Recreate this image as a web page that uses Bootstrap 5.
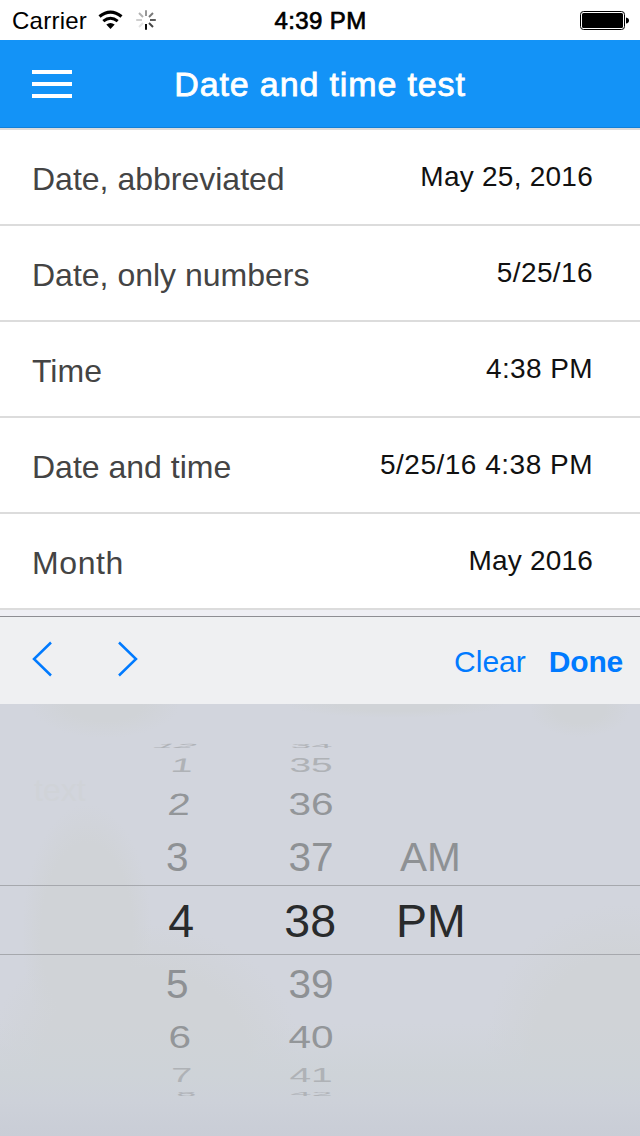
<!DOCTYPE html>
<html lang="en">
<head>
<meta charset="utf-8">
<meta name="viewport" content="width=device-width, initial-scale=1">
<title>Date and time test</title>
<link href="https://cdn.jsdelivr.net/npm/bootstrap@5.3.0/dist/css/bootstrap.min.css" rel="stylesheet">
<style>
body{font-family:"Liberation Sans",Arial,sans-serif;background:#efeff4;height:1136px;overflow:hidden;line-height:1;color:#000}
.status-bar{height:40px;font-size:24px;background:#fff}
.carrier{letter-spacing:.25px;padding-top:2px}
.clock{letter-spacing:.4px;-webkit-text-stroke:.7px #000;padding-top:2px;margin-right:1px}
.app-bar{height:88px;background:#1393f7;border-bottom:1px solid #1080da}
.app-title{font-size:34px;letter-spacing:.86px;color:#fff;-webkit-text-stroke:.8px #fff;line-height:40px}
.fields{border-top:2px solid #dcdcdc}
.list-group-flush>.field-row{height:96px;padding:0 47px 0 32px;border:solid #dcdcdc;border-width:0 0 2px!important;background:#fff;border-radius:0}
.field-label{font-size:32px;color:#444;line-height:36px;padding-top:3px}
.field-value{font-size:28px;color:#111;letter-spacing:.4px;line-height:36px;margin-top:-1px}
.accessory{height:88px;margin-top:6px;background:#eff0f2;border-top:1px solid #8e8e93;padding:0 17px 0 32px;color:#007aff;font-size:30px}
.btn-plain{border:0;background:none;color:#007aff;padding:2px 0 0;line-height:36px;font-size:30px}
.wheel{height:432px;padding-top:38px;grid-template-rows:8px 30px 48px 57px 70px 57px 48px 30px 8px;align-content:start;
background:
radial-gradient(ellipse 75px 34px at 105px 0,#d0d3d7 50%,transparent),
radial-gradient(ellipse 110px 14px at 395px 0,#d0d3d7 50%,transparent),
radial-gradient(ellipse 50px 28px at 580px 5px,#d0d3d7 50%,transparent),
linear-gradient(#ced2d600 0,#ced2d600 74%,#ced3d8 86%,#cdd1d9 92%,#c9cdd6 100%),
radial-gradient(ellipse 65px 130px at 87px 230px,#d0d3d7 70%,transparent),
radial-gradient(ellipse 155px 130px at 145px 350px,#d0d3d7 65%,transparent),
radial-gradient(ellipse 135px 150px at 620px 350px,#d0d3d7 65%,transparent),
linear-gradient(#d2d5dd 0,#d2d5dd 82%,#d0d3d8 91%,#cbcfd6 100%)}
.wheel-row{display:grid;grid-template-columns:194px 142px 304px;grid-template-rows:100%;min-height:0;color:#8e9194;font-size:40.5px}
.wheel-row>span{display:flex;align-items:center;justify-content:flex-end;white-space:nowrap;line-height:1;min-height:0}
.wheel-row>span:last-child{justify-content:flex-start;padding-left:63px}
.wheel-row i{font-style:normal;display:block}
.chosen{font-size:46.5px;color:#292b2c;border-top:1px solid #a6a8ad;border-bottom:1px solid #a6a8ad}
.tilt-2{color:#939699}
.tilt-3{color:#afb2b6}
.tilt-4{color:#b0b3b8}
.ghost{left:34px;top:70px;font-size:32px;color:#d0d3d8}
</style>
<script src="https://cdn.jsdelivr.net/npm/bootstrap@5.3.0/dist/js/bootstrap.bundle.min.js"></script>
</head>
<body class="d-flex flex-column">
<div class="status-bar row g-0 align-items-center flex-shrink-0">
  <div class="col d-flex align-items-center" style="padding-left:12px">
    <span class="carrier">Carrier</span>
    <svg width="26" height="20" viewBox="98 10 26 20" style="margin-left:11px" fill="none" stroke="#000"><path d="M99.5 16.6Q110.5 7.6 121.500 16.600" stroke-width="3.200"/><path d="M103.300 21.200Q110.500 15.400 117.700 21.200" stroke-width="3"/><path d="M106.300 24.500Q110.500 21.300 114.700 24.500L110.500 28.900Z" fill="#000" stroke="none"/></svg>
    <svg width="20" height="20" viewBox="-10 -10 20 20" style="margin-left:12px" stroke-width="1.900"><path d="M0 4V9.800" stroke="#000"/><path d="M3 3L7 7" stroke="#444"/><path d="M4 0H9.800" stroke="#555"/><path d="M3-3L7-7" stroke="#777"/><path d="M0-4V-9.800" stroke="#929292"/><path d="M-3-3L-7-7" stroke="#b0b0b0"/><path d="M-4 0H-9.800" stroke="#ccc"/><path d="M-3 3L-7 7" stroke="#e2e2e2"/></svg>
  </div>
  <div class="col-auto clock">4:39 PM</div>
  <div class="col d-flex justify-content-end" style="padding-right:10px">
    <svg width="50" height="20" viewBox="0 0 50 20"><rect x=".5" y="1.500" width="44" height="18" rx="3" fill="none" stroke="#000"/><rect x="2" y="3" width="41" height="15" rx="1.500"/><path d="M46 7.500Q49 8 49 10.500T46 13.500Z"/></svg>
  </div>
</div>
<header class="app-bar row g-0 align-items-center flex-shrink-0">
  <div class="col"><svg style="margin-left:32px" width="40" height="30" viewBox="0 0 40 30" fill="#fff"><path d="M0 1H40V5H0ZM0 13H40V17H0ZM0 25H40V29H0Z"/></svg></div>
  <div class="col-auto app-title">Date and time test</div>
  <div class="col"></div>
</header>
<ul class="list-group list-group-flush fields flex-shrink-0 rounded-0">
  <li class="list-group-item field-row d-flex justify-content-between align-items-center"><span class="field-label">Date, abbreviated</span><span class="field-value" style="letter-spacing:.25px">May 25, 2016</span></li>
  <li class="list-group-item field-row d-flex justify-content-between align-items-center"><span class="field-label">Date, only numbers</span><span class="field-value">5/25/16</span></li>
  <li class="list-group-item field-row d-flex justify-content-between align-items-center"><span class="field-label">Time</span><span class="field-value">4:38 PM</span></li>
  <li class="list-group-item field-row d-flex justify-content-between align-items-center"><span class="field-label">Date and time</span><span class="field-value" style="letter-spacing:.5px">5/25/16 4:38 PM</span></li>
  <li class="list-group-item field-row d-flex justify-content-between align-items-center"><span class="field-label" style="letter-spacing:.6px">Month</span><span class="field-value" style="letter-spacing:.2px">May 2016</span></li>
</ul>
<div class="accessory d-flex align-items-center flex-shrink-0">
  <svg width="108" height="40" viewBox="0 0 108 40" fill="none" stroke="#007aff" stroke-width="2.500" class="mb-1"><path d="M19 3.500L2 20L19 36.500M87 3.500L104 20L87 36.500"/></svg>
  <button class="btn-plain ms-auto">Clear</button>
  <button class="btn-plain fw-bold" style="margin-left:23px;letter-spacing:-.2px">Done</button>
</div>
<div class="wheel d-grid flex-shrink-0 position-relative">
  <span class="ghost position-absolute" aria-hidden="true">text</span>
  <div class="wheel-row tilt-4"><span><i style="transform:translate(4px,0) scale(.9,.15) skewX(-20deg)">12</i></span><span><i style="transform:translateX(-2px) scale(.93,.15)">34</i></span><span></span></div>
  <div class="wheel-row tilt-3"><span><i style="transform:scaleY(.48) skewX(-5deg)">1</i></span><span><i style="transform:translateX(-2.500px) scale(.96,.48)">35</i></span><span></span></div>
  <div class="wheel-row tilt-2"><span><i style="transform:translateX(-3px) scaleY(.76) skewX(-4deg)">2</i></span><span><i style="transform:translateX(-2.500px) scaleY(.76)">36</i></span><span></span></div>
  <div class="wheel-row"><span><i style="transform:translate(-5.500px,1px)">3</i></span><span><i style="transform:translate(-2.500px,1px)">37</i></span><span><i style="transform:translate(1px,1px)">AM</i></span></div>
  <div class="wheel-row chosen"><span><i style="transform:translateY(1px)">4</i></span><span><i style="transform:translateY(1px)">38</i></span><span style="padding-left:60px"><i style="transform:translateY(1px)">PM</i></span></div>
  <div class="wheel-row"><span><i style="transform:translate(-5.500px,.5px)">5</i></span><span><i style="transform:translate(-2.500px,.5px)">39</i></span><span></span></div>
  <div class="wheel-row tilt-2"><span><i style="transform:translate(-3px,1px) scaleY(.76)">6</i></span><span><i style="transform:translate(-2.500px,1px) scaleY(.76)">40</i></span><span></span></div>
  <div class="wheel-row tilt-3"><span><i style="transform:translateX(-.5px) scale(.93,.48)">7</i></span><span><i style="transform:translateX(-2.500px) scale(.96,.48)">41</i></span><span></span></div>
  <div class="wheel-row tilt-4"><span><i style="transform:translateX(4px) scale(.9,.15)">8</i></span><span><i style="transform:translateX(-2px) scale(.93,.15)">42</i></span><span></span></div>
</div>
</body>
</html>
